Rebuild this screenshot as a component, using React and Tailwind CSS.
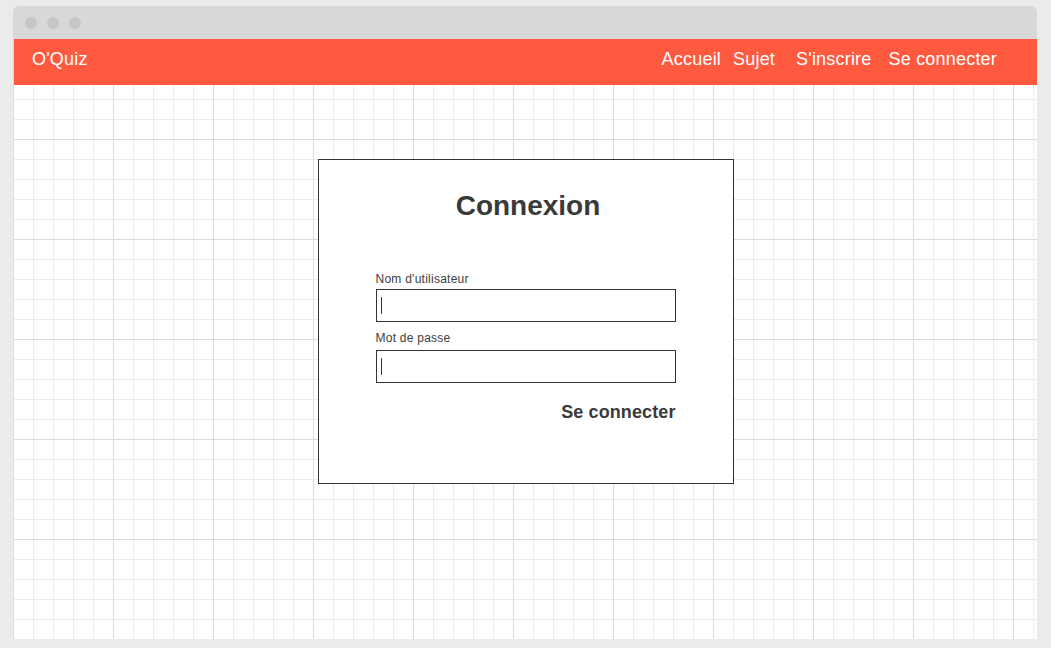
const NAV_LINKS = [
  { label: "Accueil", className: "ml-auto" },
  { label: "Sujet", className: "ml-[12px]" },
  { label: "S'inscrire", className: "ml-[21px]" },
  { label: "Se connecter", className: "ml-[17px]" },
];

const GRID_BG =
  "bg-white bg-[linear-gradient(to_right,#dcdcdc_1px,transparent_1px),linear-gradient(to_bottom,#dcdcdc_1px,transparent_1px),linear-gradient(to_right,#ececec_1px,transparent_1px),linear-gradient(to_bottom,#ececec_1px,transparent_1px)] bg-[size:100px_100px,100px_100px,20px_20px,20px_20px]";

function Field({ label, labelClass }) {
  return (
    <div>
      <label className={`block text-[12px] leading-4 tracking-[0.25px] text-[#3d3d3d] ${labelClass}`}>
        {label}
      </label>
      <div className="h-[33px] w-[300px] border border-[#333] bg-white flex items-center pl-[4px]">
        <span className="block w-px h-[17px] bg-[#333]" />
      </div>
    </div>
  );
}

export default function App() {
  return (
    <div
      className="min-h-screen bg-[#ebebeb] pl-[13px] pr-[14px] pt-[6px]"
      style={{ fontFamily: '"Liberation Sans", Arial, sans-serif' }}
    >
      <div className="w-[1024px]">
        <div className="h-[33px] bg-[#d8d8d8] rounded-t-md flex items-center gap-[10px] pl-[12px]">
          <span className="w-3 h-3 rounded-full bg-[#c6c6c6]" />
          <span className="w-3 h-3 rounded-full bg-[#c6c6c6]" />
          <span className="w-3 h-3 rounded-full bg-[#c6c6c6]" />
        </div>

        <div className={`h-[600px] flex flex-col ${GRID_BG}`}>
          <nav className="ml-px h-[46px] bg-[#ff5a3f] flex items-start pt-[8px] pl-[18px] pr-10 text-white text-[18px] leading-6 tracking-[0.2px]">
            <span>O'Quiz</span>
            {NAV_LINKS.map(({ label, className }) => (
              <a key={label} href="#" className={className}>
                {label}
              </a>
            ))}
          </nav>

          <section className="ml-px flex-1 pt-[74px]">
            <div className="mx-auto w-[416px] h-[325px] border border-[#333] bg-white pt-[30px] flex flex-col items-center">
              <h1 className="ml-[5px] text-[28px] leading-8 font-bold text-[#3a3a3a]">Connexion</h1>

              <form className="mt-[49px] w-[300px]">
                <Field label="Nom d'utilisateur" labelClass="mb-[2px]" />
                <div className="mt-[8px]">
                  <Field label="Mot de passe" labelClass="mb-[4px]" />
                </div>
                <div className="mt-[17px] flex justify-end">
                  <button
                    type="button"
                    className="text-[18px] leading-6 font-bold tracking-[0.1px] text-[#3a3a3a]"
                  >
                    Se connecter
                  </button>
                </div>
              </form>
            </div>
          </section>
        </div>
      </div>
    </div>
  );
}
